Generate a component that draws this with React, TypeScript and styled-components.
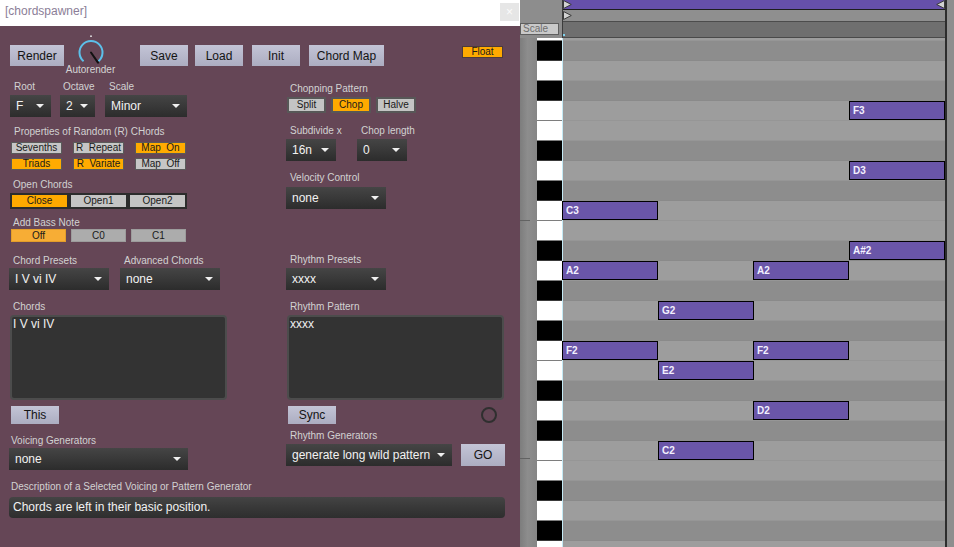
import React from "react";
import styled, { createGlobalStyle } from "styled-components";

const GlobalStyle = createGlobalStyle`
  html, body { margin: 0; padding: 0; }
  body { background: #8e8e8e; font-family: "Liberation Sans", Arial, sans-serif; }
  *, *::before, *::after { box-sizing: border-box; }
`;

const Page = styled.div`
  display: flex;
  width: 954px;
  height: 547px;
  overflow: hidden;
`;

/* ---------------- panel ---------------- */
const Panel = styled.div`
  flex: 0 0 520px;
  height: 547px;
  background: #654656;
  display: flex;
  flex-direction: column;
`;

const TitleBar = styled.div`
  flex: 0 0 26px;
  background: #ffffff;
  display: flex;
  align-items: flex-start;
  justify-content: space-between;
  padding: 0 1px 0 5px;
`;

const Title = styled.span`
  font-family: "Liberation Sans", Arial, sans-serif;
  font-size: 12px;
  line-height: 23px;
  color: #8b7e97;
`;

const CloseBox = styled.div`
  margin-top: 3px;
  width: 19px;
  height: 18px;
  background: #e6e6e6;
  color: #fbfbfb;
  font-size: 12px;
  line-height: 18px;
  text-align: center;
`;

const Body = styled.div`
  flex: 1;
  display: flex;
  flex-direction: column;
  padding: 9px 15px 0 9px;
`;

const Toolbar = styled.div`
  display: flex;
  align-items: flex-start;
  height: 40px;
`;

const LavButton = styled.div<{ $w: number; $h?: number; $ml?: number; $mt?: number }>`
  flex: 0 0 auto;
  width: ${(p) => p.$w}px;
  height: ${(p) => p.$h ?? 21}px;
  margin-left: ${(p) => p.$ml ?? 0}px;
  margin-top: ${(p) => p.$mt ?? 0}px;
  background: linear-gradient(#c3c4d6, #acadc1);
  color: #141414;
  font-size: 12px;
  display: flex;
  align-items: center;
  justify-content: center;
`;

const KnobWrap = styled.div`
  margin-left: 2px;
  width: 49px;
  display: flex;
  flex-direction: column;
  align-items: center;
`;

const KnobCaption = styled.span`
  margin-top: -1px;
  font-size: 10px;
  line-height: 12px;
  color: #d4d4d4;
`;

const FloatToggle = styled.div`
  margin: 11px 2px 0 auto;
  width: 41px;
  height: 12px;
  background: #ffaa00;
  border: 1px solid #4d3b3a;
  color: #1a1a1a;
  font-size: 10px;
  line-height: 10px;
  text-align: center;
`;

const Columns = styled.div`
  display: grid;
  grid-template-columns: 277px 219px;
  align-items: start;
`;

const Column = styled.div`
  display: flex;
  flex-direction: column;
`;

const Label = styled.div<{ $mt?: number; $indent?: number }>`
  margin-top: ${(p) => p.$mt ?? 0}px;
  padding-left: ${(p) => p.$indent ?? 4}px;
  height: 12px;
  font-size: 10px;
  line-height: 12px;
  color: #d2d2d2;
  white-space: nowrap;
`;

const Row = styled.div<{ $mt?: number; $gap?: number; $ml?: number; $mr?: number; $between?: boolean }>`
  display: flex;
  align-items: flex-start;
  justify-content: ${(p) => (p.$between ? "space-between" : "flex-start")};
  margin-top: ${(p) => p.$mt ?? 0}px;
  margin-left: ${(p) => p.$ml ?? 0}px;
  margin-right: ${(p) => p.$mr ?? 0}px;
  gap: ${(p) => p.$gap ?? 0}px;
`;

const Field = styled.div<{ $w: number }>`
  display: flex;
  flex-direction: column;
  width: ${(p) => p.$w}px;
`;

const DropBox = styled.div<{ $w: number; $mt?: number }>`
  flex: 0 0 auto;
  width: ${(p) => p.$w}px;
  height: 22px;
  margin-top: ${(p) => p.$mt ?? 0}px;
  background: linear-gradient(#454545, #3a3a3a 45%, #2c2c2c);
  color: #f2f2f2;
  font-size: 12px;
  display: flex;
  align-items: center;
  justify-content: space-between;
  padding: 0 7px 0 6px;
  white-space: nowrap;
`;

const Arrow = styled.span`
  width: 0;
  height: 0;
  border-left: 4px solid transparent;
  border-right: 4px solid transparent;
  border-top: 4px solid #f0f0f0;
  margin-left: 6px;
`;

const Dropdown = ({ w, mt, children }: { w: number; mt?: number; children: React.ReactNode }) => (
  <DropBox $w={w} $mt={mt}>
    <span>{children}</span>
    <Arrow />
  </DropBox>
);

const Toggle = styled.div<{ $on?: boolean; $w: number }>`
  width: ${(p) => p.$w}px;
  height: 12px;
  background: ${(p) => (p.$on ? "#ffab00" : "#c6c6c6")};
  border: 1px solid #5a5a5a;
  color: #1a1a1a;
  font-size: 10px;
  line-height: 10px;
  text-align: center;
  white-space: pre;
`;

const PatternButton = styled.div<{ $on?: boolean; $w: number }>`
  width: ${(p) => p.$w}px;
  height: 16px;
  background: ${(p) => (p.$on ? "#ffaa00" : "#c4c4c4")};
  border: 2px solid #575757;
  color: #1a1a1a;
  font-size: 10px;
  line-height: 12px;
  text-align: center;
`;

const SegButton = styled.div<{ $on?: boolean }>`
  width: 59px;
  height: 16px;
  background: ${(p) => (p.$on ? "#ffaa00" : "#c4c4c4")};
  border: 2px solid #2c2c2c;
  color: #1a1a1a;
  font-size: 10px;
  line-height: 12px;
  text-align: center;
`;

const BassButton = styled.div<{ $on?: boolean }>`
  width: 55px;
  height: 13px;
  background: ${(p) => (p.$on ? "#f7ad35" : "#acacac")};
  border: 1px solid ${(p) => (p.$on ? "#e39d2a" : "#9c9c9c")};
  color: #1a1a1a;
  font-size: 10px;
  line-height: 11px;
  text-align: center;
`;

const TextBox = styled.div<{ $ml?: number }>`
  margin-top: 2px;
  margin-left: ${(p) => p.$ml ?? 0}px;
  width: 217px;
  height: 85px;
  background: #333333;
  border: 2px solid #4c4c4c;
  border-radius: 4px;
  color: #f0f0f0;
  font-size: 12px;
  line-height: 14px;
  padding: 0 1px;
`;

const Ring = styled.div`
  margin-top: 1px;
  width: 16px;
  height: 16px;
  border-radius: 50%;
  border: 2px solid #2f2f2f;
`;

const DescField = styled.div`
  margin-top: 4px;
  height: 21px;
  background: linear-gradient(#444444, #383838 50%, #2e2e2e);
  border-radius: 4px;
  color: #f2f2f2;
  font-size: 12px;
  line-height: 21px;
  padding-left: 4px;
`;

/* ---------------- piano roll ---------------- */
const Roll = styled.div`
  flex: 0 0 434px;
  height: 547px;
  display: flex;
  flex-direction: column;
  background: #8e8e8e;
  overflow: hidden;
`;

const RollHeader = styled.div`
  display: flex;
  flex: 0 0 38px;
`;

const HeaderGutter = styled.div`
  flex: 0 0 43px;
  background: #8d8d8d;
  border-right: 1px solid #3c3c3c;
  display: flex;
  align-items: flex-end;
  padding-bottom: 3px;
`;

const ScaleButton = styled.div`
  width: 39px;
  height: 12px;
  background: #c9c9c9;
  border: 1px solid #5e5e5e;
  color: #6e6e6e;
  font-size: 10px;
  line-height: 10px;
  padding-left: 2px;
`;

const HeaderMain = styled.div`
  flex: 0 0 382px;
  display: flex;
  flex-direction: column;
`;

const LoopBar = styled.div`
  flex: 0 0 10px;
  background: #6650aa;
  border-bottom: 1px solid #1e1e1e;
  display: flex;
  justify-content: space-between;
  align-items: flex-start;
`;

const MarkerBar = styled.div`
  flex: 0 0 12px;
  background: #8f8f8f;
  border-bottom: 1px solid #4c4c4c;
  display: flex;
  align-items: center;
`;

const RulerBar = styled.div`
  flex: 0 0 16px;
  background: #6f6f6f;
  border-bottom: 1px solid #4a4a4a;
  display: flex;
  align-items: flex-end;
`;

const CyanTick = styled.div`
  width: 2px;
  height: 2px;
  margin-bottom: 1px;
  background: #7fd3ee;
`;

const EndLine = styled.div`
  flex: 0 0 2px;
  background: #2d2d2d;
`;

const EndPad = styled.div`
  flex: 0 0 7px;
  background: #8e8e8e;
`;

const RollBody = styled.div`
  display: flex;
  flex: 1;
  min-height: 0;
`;

const Strip = styled.div`
  flex: 0 0 17px;
  background: linear-gradient(90deg, #7d7d7d, #8d8d8d 45%, #858585);
  display: flex;
  flex-direction: column;
`;

const Thumb = styled.div`
  margin-top: 182px;
  width: 10px;
  height: 239px;
  border-top: 1px solid #626262;
  border-bottom: 1px solid #626262;
`;

const Keys = styled.div`
  flex: 0 0 25px;
  display: flex;
  flex-direction: column;
  background: #ffffff;
`;

const Key = styled.div<{ $black: boolean; $h: number }>`
  flex: 0 0 ${(p) => p.$h}px;
  background: ${(p) => (p.$black ? "#000000" : "#ffffff")};
  border-bottom: 1px solid ${(p) => (p.$black ? "#3a3a3a" : "#7e7e7e")};
`;

const Grid = styled.div`
  position: relative;
  flex: 0 0 383px;
  display: flex;
  flex-direction: column;
  &::before {
    content: "";
    position: absolute;
    left: 0;
    top: 0;
    bottom: 0;
    width: 1px;
    background: #c4eaf5;
    z-index: 1;
  }
`;

const GridRow = styled.div<{ $dark: boolean; $h: number }>`
  flex: 0 0 ${(p) => p.$h}px;
  background: ${(p) => (p.$dark ? "#8d8d8d" : "#9d9d9d")};
  border-bottom: 1px solid ${(p) => (p.$dark ? "#8a8a8a" : "#969696")};
`;

const Note = styled.div`
  position: absolute;
  z-index: 2;
  width: 96px;
  height: 19px;
  background: #6a56a8;
  border: 1px solid #000000;
  color: #f3f0ff;
  font-weight: bold;
  font-size: 10px;
  line-height: 17px;
  padding-left: 3px;
`;

const TriRight = () => (
  <svg width="9" height="9" viewBox="0 0 9 9">
    <path d="M0.5 0.5 L8.3 4.5 L0.5 8.5 Z" fill="#d2d2d2" stroke="#3a3a3a" strokeWidth="1" />
  </svg>
);

const TriLeft = () => (
  <svg width="9" height="9" viewBox="0 0 9 9">
    <path d="M8.5 0.5 L0.7 4.5 L8.5 8.5 Z" fill="#d2d2d2" stroke="#3a3a3a" strokeWidth="1" />
  </svg>
);

const Knob = () => (
  <svg width="30" height="30" viewBox="0 0 30 30">
    <circle cx="15" cy="1.2" r="0.9" fill="#e8e8e8" />
    <path
      d="M 7.6 26.3 A 11.5 11.5 0 1 1 22.4 26.3"
      fill="none"
      stroke="#5cc0ea"
      strokeWidth="2"
    />
    <line x1="15" y1="17.5" x2="22" y2="27.6" stroke="#111" strokeWidth="2" strokeLinecap="round" />
  </svg>
);

const ROWS = [
  "G#3", "G3", "F#3", "F3", "E3", "D#3", "D3", "C#3", "C3", "B2", "A#2", "A2", "G#2",
  "G2", "F#2", "F2", "E2", "D#2", "D2", "C#2", "C2", "B1", "A#1", "A1", "G#1", "G1",
];

const NOTES: { n: string; col: number }[] = [
  { n: "F3", col: 3 },
  { n: "D3", col: 3 },
  { n: "C3", col: 0 },
  { n: "A#2", col: 3 },
  { n: "A2", col: 0 },
  { n: "A2", col: 2 },
  { n: "G2", col: 1 },
  { n: "F2", col: 0 },
  { n: "F2", col: 2 },
  { n: "E2", col: 1 },
  { n: "D2", col: 2 },
  { n: "C2", col: 1 },
];

export default function App() {
  return (
    <>
      <GlobalStyle />
      <Page>
        <Panel>
          <TitleBar>
            <Title>[chordspawner]</Title>
            <CloseBox>×</CloseBox>
          </TitleBar>
          <Body>
            <Toolbar>
              <LavButton $w={54} $ml={1} $mt={10}>Render</LavButton>
              <KnobWrap>
                <Knob />
                <KnobCaption>Autorender</KnobCaption>
              </KnobWrap>
              <LavButton $w={48} $ml={25} $mt={10}>Save</LavButton>
              <LavButton $w={48} $ml={7} $mt={10}>Load</LavButton>
              <LavButton $w={48} $ml={9} $mt={10}>Init</LavButton>
              <LavButton $w={75} $ml={9} $mt={10}>Chord Map</LavButton>
              <FloatToggle>Float</FloatToggle>
            </Toolbar>

            <Columns>
              <Column>
                <Row $ml={1} $gap={9}>
                  <Field $w={41}>
                    <Label $mt={6}>Root</Label>
                    <Dropdown w={41} mt={2}>F</Dropdown>
                  </Field>
                  <Field $w={35}>
                    <Label $mt={6} $indent={3}>Octave</Label>
                    <Dropdown w={35} mt={2}>2</Dropdown>
                  </Field>
                  <Field $w={82} style={{ marginLeft: 1 }}>
                    <Label $mt={6}>Scale</Label>
                    <Dropdown w={82} mt={2}>Minor</Dropdown>
                  </Field>
                </Row>

                <Label $mt={9} $indent={5}>Properties of Random (R) CHords</Label>
                <Row $mt={4} $ml={2} $gap={11}>
                  <Toggle $w={51}>Sevenths</Toggle>
                  <Toggle $w={51}>{"R  Repeat"}</Toggle>
                  <Toggle $w={51} $on>{"Map  On"}</Toggle>
                </Row>
                <Row $mt={4} $ml={2} $gap={11}>
                  <Toggle $w={51} $on>Triads</Toggle>
                  <Toggle $w={51} $on>{"R  Variate"}</Toggle>
                  <Toggle $w={51}>{"Map  Off"}</Toggle>
                </Row>

                <Label $mt={9}>Open Chords</Label>
                <Row $mt={2} $ml={1}>
                  <SegButton $on>Close</SegButton>
                  <SegButton>Open1</SegButton>
                  <SegButton>Open2</SegButton>
                </Row>

                <Label $mt={8}>Add Bass Note</Label>
                <Row $ml={2} $gap={5}>
                  <BassButton $on>Off</BassButton>
                  <BassButton>C0</BassButton>
                  <BassButton>C1</BassButton>
                </Row>

                <Row $gap={11}>
                  <Field $w={100}>
                    <Label $mt={13}>Chord Presets</Label>
                    <Dropdown w={100} mt={1}>I V vi IV</Dropdown>
                  </Field>
                  <Field $w={100}>
                    <Label $mt={13}>Advanced Chords</Label>
                    <Dropdown w={100} mt={1}>none</Dropdown>
                  </Field>
                </Row>

                <Label $mt={11}>Chords</Label>
                <TextBox $ml={1}>I V vi IV</TextBox>

                <LavButton $w={48} $h={18} $ml={2} $mt={6}>This</LavButton>

                <Label $mt={11} $indent={2}>Voicing Generators</Label>
                <Dropdown w={179} mt={1}>none</Dropdown>
              </Column>

              <Column>
                <Label $mt={8}>Chopping Pattern</Label>
                <Row $mt={2} $ml={1} $gap={5}>
                  <PatternButton $w={39}>Split</PatternButton>
                  <PatternButton $w={40} $on>Chop</PatternButton>
                  <PatternButton $w={40}>Halve</PatternButton>
                </Row>

                <Row $gap={21}>
                  <Field $w={50}>
                    <Label $mt={12}>Subdivide x</Label>
                    <Dropdown w={50} mt={2}>16n</Dropdown>
                  </Field>
                  <Field $w={50}>
                    <Label $mt={12}>Chop length</Label>
                    <Dropdown w={50} mt={2}>0</Dropdown>
                  </Field>
                </Row>

                <Label $mt={11}>Velocity Control</Label>
                <Dropdown w={100} mt={3}>none</Dropdown>

                <Label $mt={45}>Rhythm Presets</Label>
                <Dropdown w={100} mt={2}>xxxx</Dropdown>

                <Label $mt={11}>Rhythm Pattern</Label>
                <TextBox $ml={1}>xxxx</TextBox>

                <Row $mt={6} $ml={2} $mr={8} $between>
                  <LavButton $w={48} $h={18}>Sync</LavButton>
                  <Ring />
                </Row>

                <Label $mt={6}>Rhythm Generators</Label>
                <Row $mt={2} $gap={9}>
                  <Dropdown w={166}>generate long wild pattern</Dropdown>
                  <LavButton $w={44} $h={22}>GO</LavButton>
                </Row>
              </Column>
            </Columns>

            <Label $mt={11} $indent={2}>Description of a Selected Voicing or Pattern Generator</Label>
            <DescField>Chords are left in their basic position.</DescField>
          </Body>
        </Panel>

        <Roll>
          <RollHeader>
            <HeaderGutter>
              <ScaleButton>Scale</ScaleButton>
            </HeaderGutter>
            <HeaderMain>
              <LoopBar>
                <TriRight />
                <TriLeft />
              </LoopBar>
              <MarkerBar>
                <TriRight />
              </MarkerBar>
              <RulerBar>
                <CyanTick />
              </RulerBar>
            </HeaderMain>
            <EndLine />
            <EndPad />
          </RollHeader>

          <RollBody>
            <Strip>
              <Thumb />
            </Strip>
            <Keys>
              <Key $black={false} $h={3} />
              {ROWS.map((r) => (
                <Key key={r} $black={r.includes("#")} $h={20} />
              ))}
            </Keys>
            <Grid>
              <GridRow $dark={false} $h={3} />
              {ROWS.map((r) => (
                <GridRow key={r} $dark={r.includes("#")} $h={20} />
              ))}
              {NOTES.map((n, i) => (
                <Note
                  key={i}
                  style={{
                    top: 3 + 20 * ROWS.indexOf(n.n),
                    left: Math.round(95.6 * n.col),
                  }}
                >
                  {n.n}
                </Note>
              ))}
            </Grid>
            <EndLine />
            <EndPad />
          </RollBody>
        </Roll>
      </Page>
    </>
  );
}
